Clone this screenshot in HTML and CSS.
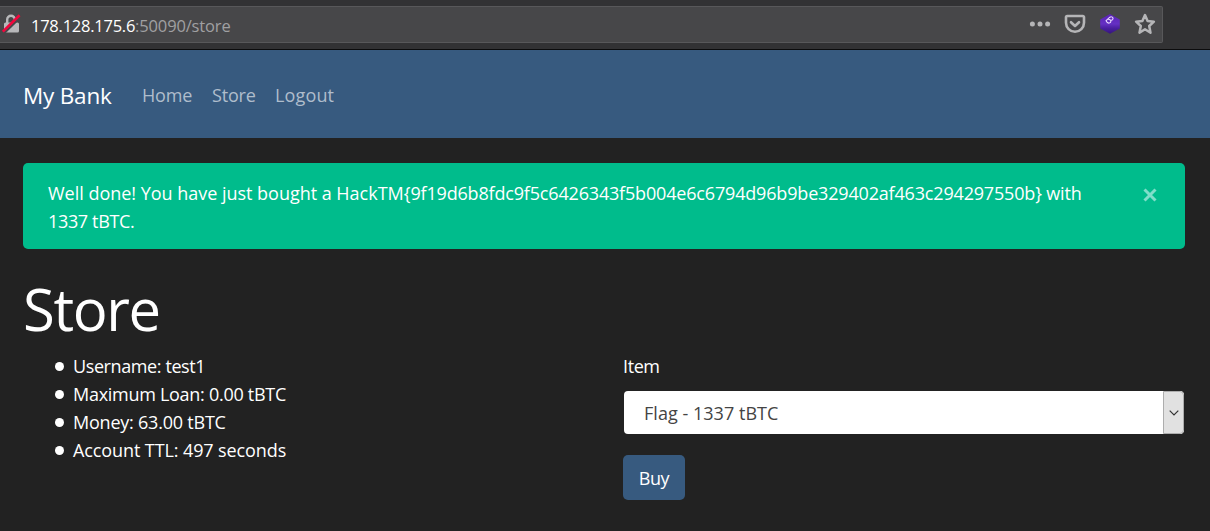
FILE: index.html
```html
<!DOCTYPE html>
<html lang="en">
<head>
<meta charset="utf-8">
<title>My Bank - Store</title>
<link rel="stylesheet" href="styles.css">
</head>
<body>
<header class="toolbar">
  <div class="urlbar">
    <svg class="lock" width="20" height="20" viewBox="0 0 20 20"><path d="M6.2 9V5.600a3.800 3.800 0 0 1 7.600 0V9" fill="none" stroke="#b8b8ba" stroke-width="2.4"/><rect x="3" y="8.6" width="15" height="9.9" rx="1.5" fill="#b8b8ba"/><path d="M2.600 19.400L19.600 3" stroke="#48484a" stroke-width="2.500"/><path d="M1.800 17.600L18.600 1.200" stroke="#f2063c" stroke-width="2.600"/></svg>
    <span class="url"><span class="host">178.128.175.6</span><span class="path">:50090/store</span></span>
    <div class="actions">
      <svg width="22" height="22" viewBox="0 0 22 22" fill="#b5b5b7"><circle cx="3.4" cy="11" r="2.5"/><circle cx="11" cy="11" r="2.5"/><circle cx="18.6" cy="11" r="2.5"/></svg>
      <svg width="22" height="22" viewBox="0 0 22 22" fill="none" stroke="#b5b5b7" stroke-width="2.6" stroke-linecap="round" stroke-linejoin="round"><path d="M3.200 3h15.600a1.200 1.200 0 0 1 1.200 1.200v5.600a9 9 0 0 1-18 0V4.200A1.200 1.200 0 0 1 3.200 3z"/><path d="M7 9.200l4 3.800 4-3.800"/></svg>
      <svg width="22" height="22" viewBox="0 0 22 22"><defs><linearGradient id="cube" x1="0" y1="0" x2="0" y2="1"><stop offset="0" stop-color="#5a22b4"/><stop offset=".5" stop-color="#6530c4"/><stop offset=".72" stop-color="#4a1f9f"/><stop offset="1" stop-color="#35157d"/></linearGradient></defs><path d="M11 1l9.800 5.500v9L11 20.800 1.200 15.500v-9z" fill="url(#cube)"/><path d="M7.100 7.700l3.700-3.500c1.700-1.200 4 .3 3 2.100-.6 1-1.700 1.100-2.400.7.800 1 .5 2.200-.6 2.800-1.500.7-2.900-.4-3.700-2.100zM9 6.100l2.400.9" fill="none" stroke="#e9dcff" stroke-width="1.100"/></svg>
      <svg width="22" height="22" viewBox="0 0 22 22" fill="none" stroke="#b5b5b7" stroke-width="2.5" stroke-linejoin="round"><path d="M11 2.100l2.600 5.900 6.300.7-4.700 4.300 1.300 6.700-5.500-3.400-5.500 3.400 1.300-6.700L2.100 8.700l6.300-.7z"/></svg>
    </div>
  </div>
</header>
<nav class="navbar">
  <a class="brand">My Bank</a>
  <a class="link home">Home</a>
  <a class="link store">Store</a>
  <a class="link logout">Logout</a>
</nav>
<main class="container">
  <div class="alert">
    <p class="message"><span class="lead">Well done! You have just bought a HackTM{</span>9f19d6b8fdc9f5c6426343f5b004e6c6794d96b9be329402af463c294297550b} with<br><span class="amount">1337 tBTC.</span></p>
    <svg class="close" width="14" height="14" viewBox="0 0 14 14"><path d="M1.500 1.500l11 11m0-11l-11 11" stroke="#80deca" stroke-width="3"/></svg>
  </div>
  <h1>Store</h1>
  <div class="row">
    <ul class="info">
      <li class="username"><span>Username: test1</span></li>
      <li class="loan"><span>Maximum Loan: 0.00 tBTC</span></li>
      <li class="money"><span>Money: 63.00 tBTC</span></li>
      <li class="ttl"><span>Account TTL: 497 seconds</span></li>
    </ul>
    <form class="purchase">
      <label>Item</label>
      <div class="select"><span class="value">Flag - 1337 tBTC</span><span class="arrow"><svg width="10" height="6" viewBox="0 0 10 6"><path d="M.7.7L5 5 9.300.7" fill="none" stroke="#333" stroke-width="1.200"/></svg></span></div>
      <button class="buy" type="button">Buy</button>
    </form>
  </div>
</main>
</body>
</html>
```
FILE: styles.css
```css
* { box-sizing: border-box; }
body {
  margin: 0;
  height: 531px;
  overflow: hidden;
  background: #222;
  color: #fff;
  font: 18px/28px "Open Sans", "Noto Sans", sans-serif;
  letter-spacing: -0.4px;
}
.toolbar {
  height: 50px;
  padding-top: 6px;
  background: #323234;
  border-bottom: 1px solid #0c0c0d;
}
.urlbar {
  display: flex;
  align-items: center;
  width: 1163px;
  height: 37px;
  border: 1px solid #58585a;
  border-left: 0;
  border-radius: 0 2px 2px 0;
  background: #474749;
}
.lock { margin: -1px 10px 0 1px; }
.url { margin-top: 2px; font-size: 16.5px; white-space: nowrap; }
.host { letter-spacing: -0.25px; }
.path { color: #a0a0a2; letter-spacing: -0.15px; }
.actions { display: flex; gap: 13px; margin: -1px 6px 0 auto; }
.navbar {
  display: flex;
  align-items: center;
  height: 88px;
  padding: 3px 23px 0;
  background: #375a7f;
}
.brand { width: 119px; font-size: 22.5px; letter-spacing: -0.2px; }
.link { margin-top: -2px; color: #afbdcc; letter-spacing: -0.2px; }
.home { width: 70px; }
.store { width: 63px; }
.logout { letter-spacing: 0.15px; }
.container { padding: 25px 25px 0 23px; }
.alert {
  display: flex;
  justify-content: space-between;
  height: 86px;
  padding: 16px 28px 0 25px;
  border-radius: 5px;
  background: #00bc8c;
}
.message { margin: 0; letter-spacing: -0.175px; white-space: nowrap; }
.lead { letter-spacing: -0.02px; }
.amount { letter-spacing: -0.35px; }
.close { margin-top: 9px; }
h1 {
  margin: 25px 0 8px;
  font-size: 58px;
  line-height: 70px;
  font-weight: 400;
  letter-spacing: -1.4px;
}
.row { display: grid; grid-template-columns: 600px 562px; }
.info { margin: 0; padding: 0 0 0 32px; list-style: none; }
.info li { display: flex; align-items: center; gap: 9px; }
.info li::before { content: ""; width: 9px; height: 9px; border-radius: 50%; background: #fff; }
.username { letter-spacing: -0.4px; }
.loan { letter-spacing: -0.28px; }
.money { letter-spacing: -0.22px; }
.ttl { letter-spacing: -0.1px; }
.purchase { display: flex; flex-direction: column; align-items: flex-start; }
.select {
  display: flex;
  width: 560px;
  height: 43px;
  margin: 11px 0 21px 1px;
  border-radius: 4px;
  overflow: hidden;
  background: #fff;
  color: #444;
}
.value { flex: 1; padding: 8px 20px; letter-spacing: 0.03px; }
.arrow {
  display: flex;
  align-items: center;
  justify-content: center;
  width: 21px;
  border: 1px solid #adadad;
  border-radius: 0 4px 4px 0;
  background: #e1e1e1;
}
.buy {
  width: 62px;
  height: 45px;
  padding: 0;
  border: 0;
  border-radius: 5px;
  background: #375a7f;
  color: #fff;
  font: inherit;
  letter-spacing: inherit;
}
```
